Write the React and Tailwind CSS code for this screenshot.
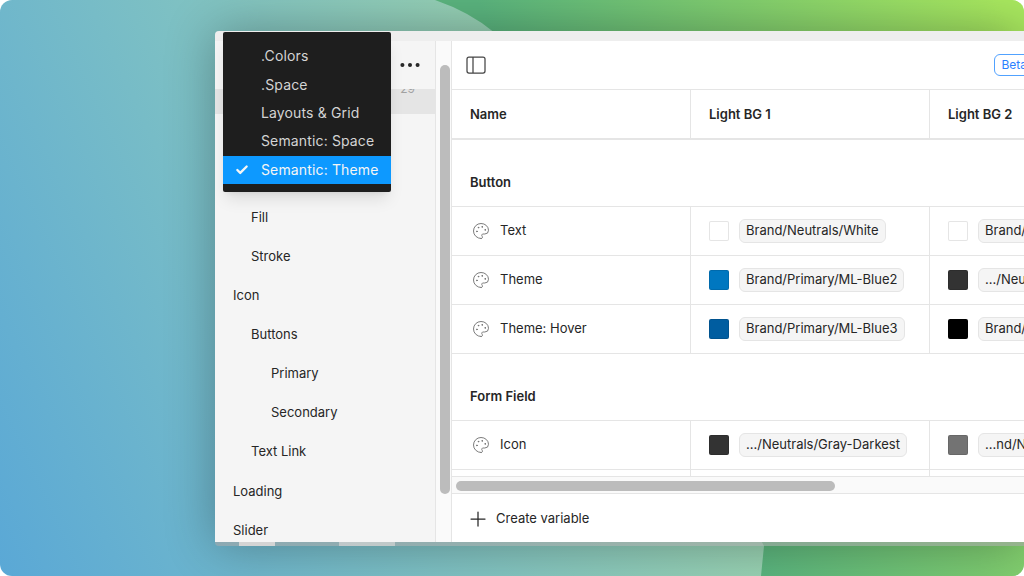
import React from "react";
import { Palette, Plus, Check, Ellipsis } from "lucide-react";

const collections = [".Colors", ".Space", "Layouts & Grid", "Semantic: Space", "Semantic: Theme"];

const tree = [
  ["Fill", "pl-9"],
  ["Stroke", "pl-9"],
  ["Icon", "pl-4.5"],
  ["Buttons", "pl-9"],
  ["Primary", "pl-14"],
  ["Secondary", "pl-14"],
  ["Text Link", "pl-9"],
  ["Loading", "pl-4.5"],
  ["Slider", "pl-4.5"],
];

function Swatch({ color }) {
  return <div className={`size-5 shrink-0 rounded-xs border border-black/10 ${color}`} />;
}

function Chip({ children }) {
  return (
    <div className="flex h-6 shrink-0 items-center whitespace-nowrap rounded-md border border-neutral-200 bg-neutral-100 px-1.5 text-neutral-800">
      {children}
    </div>
  );
}

function ValueCell({ color, label, last }) {
  return (
    <div className={`flex shrink-0 items-center gap-2.5 pl-4.5 ${last ? "w-60" : "w-[239px] border-r border-neutral-200"}`}>
      <Swatch color={color} />
      <Chip>{label}</Chip>
    </div>
  );
}

function Row({ name, a, b }) {
  return (
    <div className="box-content flex h-12 border-b border-neutral-200">
      <div className="flex w-[239px] shrink-0 items-center gap-2.5 border-r border-neutral-200 pl-5 text-neutral-800">
        <Palette size={18} strokeWidth={1.25} className="shrink-0 text-neutral-500" />
        {name}
      </div>
      <ValueCell color={a[0]} label={a[1]} />
      <ValueCell color={b[0]} label={b[1]} last />
    </div>
  );
}

function Section({ children }) {
  return (
    <div className="border-b border-neutral-200 pb-3.5 pl-4.5 pt-8 font-semibold leading-5 text-neutral-800">
      {children}
    </div>
  );
}

export default function App() {
  return (
    <div className="h-screen w-screen overflow-hidden bg-white text-[13px]" style={{ fontFamily: "Inter, sans-serif" }}>
      <div className="relative h-full overflow-hidden rounded-xl bg-linear-65 from-[#5aa8d6] to-[#c3ec8e]">
        <svg className="absolute inset-0" width="1024" height="576" viewBox="0 0 1024 576">
          <defs>
            <linearGradient id="blob" gradientUnits="userSpaceOnUse" x1="477" y1="0" x2="893" y2="-208">
              <stop offset="0" stopColor="#5ab47e" />
              <stop offset="1" stopColor="#a8e85f" />
            </linearGradient>
          </defs>
          <path d="M435 0 Q470 12 495 33 L764 546 L761 576 H1024 V0 Z" fill="url(#blob)" />
        </svg>

        <div className="relative flex h-full pb-7.5 pl-[215px] pt-[31px]">
          <div className="relative flex min-w-0 flex-1 flex-col overflow-hidden rounded-l shadow-[0_0_50px_rgba(0,0,0,0.3)]">
            <div className="h-2.5 shrink-0 bg-[#eeeeee]" />

            <div className="flex min-h-0 flex-1">
              <aside className="flex w-55 shrink-0 flex-col overflow-hidden bg-neutral-100 text-neutral-800">
                <div className="flex h-12 shrink-0 items-center justify-end pr-3">
                  <Ellipsis size={26} strokeWidth={1.75} className="text-neutral-800" />
                </div>
                <div className="min-h-0 flex-1 overflow-hidden">
                  <div className="box-content flex h-6 justify-end border-b border-neutral-200 bg-neutral-200 pr-5 text-xs leading-4 text-neutral-400">
                    <span className="-mt-2">29</span>
                  </div>
                  <div className="mt-21 flex h-88 flex-col">
                    {tree.map(([label, indent]) => (
                      <div key={label} className={`flex flex-1 items-center ${indent}`}>
                        {label}
                      </div>
                    ))}
                  </div>
                </div>
              </aside>

              <div className="w-4 shrink-0 border-l border-neutral-200 bg-neutral-50 pb-12 pl-1 pt-6">
                <div className="h-full w-2.5 rounded-full bg-neutral-400/70" />
              </div>

              <main className="flex min-w-0 flex-1 flex-col overflow-hidden border-l border-neutral-200 bg-white">
                <div className="box-content flex h-12 shrink-0 items-center justify-between border-b border-neutral-200 pl-3.5">
                  <svg width="20" height="18" viewBox="0 0 20 18" fill="none" stroke="#444" strokeWidth="1.25">
                    <rect x="1" y="1" width="18" height="16" rx="2" />
                    <path d="M7 1V17" />
                  </svg>
                  <div className="-mr-2.5 flex h-5.5 items-center rounded-md border border-blue-400 px-1.5 text-xs text-blue-500">
                    Beta
                  </div>
                </div>

                <div className="min-h-0 flex-1 overflow-hidden">
                  <div className="box-content flex h-12 border-b-2 border-neutral-200 font-semibold text-neutral-800">
                    <div className="flex w-[239px] shrink-0 items-center border-r border-neutral-200 pl-4.5 pt-0.5">Name</div>
                    <div className="flex w-[239px] shrink-0 items-center border-r border-neutral-200 pl-4.5 pt-0.5">Light BG 1</div>
                    <div className="flex shrink-0 items-center pl-4.5 pt-0.5">Light BG 2</div>
                  </div>
                  <Section>Button</Section>
                  <Row name="Text" a={["bg-white", "Brand/Neutrals/White"]} b={["bg-white", "Brand/Neutrals/White"]} />
                  <Row name="Theme" a={["bg-[#0077c0]", "Brand/Primary/ML-Blue2"]} b={["bg-[#333333]", ".../Neutrals/Gray-Darkest"]} />
                  <Row name="Theme: Hover" a={["bg-[#005da0]", "Brand/Primary/ML-Blue3"]} b={["bg-black", "Brand/Neutrals/Black"]} />
                  <Section>Form Field</Section>
                  <Row name="Icon" a={["bg-[#333333]", ".../Neutrals/Gray-Darkest"]} b={["bg-neutral-500", "...nd/Neutrals/Gray-Dark"]} />
                  <div className="flex h-12">
                    <div className="w-[239px] shrink-0 border-r border-neutral-200" />
                    <div className="w-[239px] shrink-0 border-r border-neutral-200" />
                  </div>
                </div>

                <div className="box-content h-4 shrink-0 border-y border-neutral-200 bg-neutral-50 pl-1">
                  <div className="mt-1 h-2.5 w-[379px] rounded-full bg-neutral-400/70" />
                </div>

                <div className="flex h-12 shrink-0 items-center gap-1.5 pl-3.5 pt-0.5 text-neutral-800">
                  <Plus size={24} strokeWidth={1.25} />
                  Create variable
                </div>
              </main>
            </div>

            <div className="flex h-1 shrink-0 bg-neutral-400/60">
              <div className="ml-6 w-9 bg-neutral-300" />
              <div className="ml-16 w-14 bg-neutral-300/70" />
            </div>

            <div className="absolute left-2 top-px flex h-40 w-42 flex-col rounded-xs bg-[#1e1e1e] pb-2 pt-2.5 text-sm tracking-[0.01em] text-neutral-300 shadow-lg">
              {collections.map((item, i) => {
                const selected = i === collections.length - 1;
                return (
                  <div
                    key={item}
                    className={`flex flex-1 items-center gap-2.5 pl-2.5 ${selected ? "bg-[#0d99ff] text-neutral-100" : ""}`}
                  >
                    <span className="flex size-4.5 shrink-0 items-center justify-center">
                      {selected && <Check size={14} strokeWidth={4} />}
                    </span>
                    {item}
                  </div>
                );
              })}
            </div>
          </div>
        </div>
      </div>
    </div>
  );
}
